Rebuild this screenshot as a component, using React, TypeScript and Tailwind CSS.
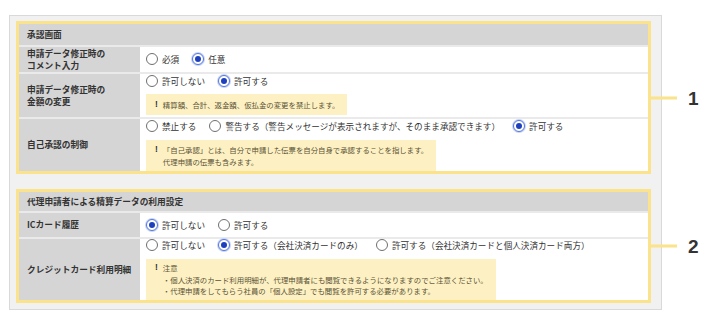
import React from "react";

interface Option {
  label: string;
  checked?: boolean;
}

function Radio({ label, checked }: Option) {
  return (
    <label className="flex items-center gap-[4px] whitespace-nowrap">
      {checked ? (
        <span className="w-[12px] h-[12px] rounded-full border border-[#5577dd] bg-white flex items-center justify-center shadow-[0_0_0_1px_#c8d4f4]">
          <span className="w-[6px] h-[6px] rounded-full bg-[#1f40bd]" />
        </span>
      ) : (
        <span className="w-[12px] h-[12px] rounded-full border border-[#6f6f6f] bg-white" />
      )}
      <span>{label}</span>
    </label>
  );
}

function Radios({ options, className }: { options: Option[]; className?: string }) {
  return (
    <div className={"flex items-center gap-[13px] " + (className ?? "")}>
      {options.map((o) => (
        <Radio key={o.label} label={o.label} checked={o.checked} />
      ))}
    </div>
  );
}

function Note({ lines, className }: { lines: string[]; className?: string }) {
  return (
    <div className={"self-start flex items-center bg-[#fdf1c3] pl-[9px] pr-[8px] text-[7.4px] leading-[11.5px] text-[#5b5236] " + (className ?? "")}>
      <div className="flex items-start gap-[5px]">
        <span className="font-bold text-[#333] text-[8.5px]" style={{ fontFamily: '"Liberation Sans", sans-serif' }}>!</span>
        <div className="flex flex-col">
          {lines.map((l) => (
            <span key={l} className="whitespace-nowrap">{l}</span>
          ))}
        </div>
      </div>
    </div>
  );
}

function Row({ label, children, className }: { label: React.ReactNode; children: React.ReactNode; className?: string }) {
  return (
    <div className="flex border-t-2 border-[#eaeaea]">
      <div className="w-[121px] shrink-0 bg-[#d5d5d5] flex items-center pl-[8px] font-bold text-[8.7px] leading-[12px] text-[#333]">
        {label}
      </div>
      <div className={"flex-1 bg-white pl-[6px] flex flex-col " + (className ?? "")}>{children}</div>
    </div>
  );
}

function Section({ title, num, headerH, children }: { title: string; num: string; headerH: string; children: React.ReactNode }) {
  return (
    <div className="relative">
      <div className="border-[3px] border-[#fae38b] bg-white">
        <div className={"bg-[#d5d5d5] flex items-center pl-[8px] font-bold text-[8.7px] text-[#333] " + headerH}>{title}</div>
        {children}
      </div>
      {/* callout */}
      <div className="absolute left-full top-1/2 -translate-y-1/2 flex items-center">
        <div className="w-[26px] h-[3px] bg-[#fae38b]" />
        <span className="ml-[11px] text-[19px] font-bold leading-none text-[#333]" style={{ fontFamily: '"Liberation Sans", Arial, sans-serif' }}>
          {num}
        </span>
      </div>
    </div>
  );
}

export default function App() {
  return (
    <div
      className="w-[713px] h-[329px] bg-white text-[8.6px] text-[#333] pt-[15px] pl-[9px]"
      style={{ fontFamily: '"Noto Sans CJK JP", "Noto Sans", sans-serif' }}
    >
      <div className="w-[653px] border border-[#d9d9d9] bg-[#f1f1f1] pt-[5px] pb-[6px] pl-[6px] pr-[10px] flex flex-col gap-[15px]">
        {/* 承認画面 */}
        <Section title="承認画面" num="1" headerH="h-[21px]">
          <Row label={<span>申請データ修正時の<br />コメント入力</span>} className="h-[25px] justify-center">
            <Radios options={[{ label: "必須" }, { label: "任意", checked: true }]} />
          </Row>
          <Row label={<span>申請データ修正時の<br />金額の変更</span>} className="h-[43px]">
            <Radios className="h-[14px]" options={[{ label: "許可しない" }, { label: "許可する", checked: true }]} />
            <Note className="mt-[6px] h-[21px]" lines={["精算額、合計、返金額、仮払金の変更を禁止します。"]} />
          </Row>
          <Row label="自己承認の制御" className="h-[52px]">
            <Radios
              className="h-[14px]"
              options={[
                { label: "禁止する" },
                { label: "警告する（警告メッセージが表示されますが、そのまま承認できます）" },
                { label: "許可する", checked: true },
              ]}
            />
            <Note
              className="mt-[7px] h-[31px]"
              lines={["「自己承認」とは、自分で申請した伝票を自分自身で承認することを指します。", "代理申請の伝票も含みます。"]}
            />
          </Row>
        </Section>

        {/* 代理申請者による精算データの利用設定 */}
        <Section title="代理申請者による精算データの利用設定" num="2" headerH="h-[19px]">
          <Row label="ICカード履歴" className="h-[24px] justify-center">
            <Radios options={[{ label: "許可しない", checked: true }, { label: "許可する" }]} />
          </Row>
          <Row label="クレジットカード利用明細" className="h-[61px]">
            <Radios
              className="h-[13px]"
              options={[
                { label: "許可しない" },
                { label: "許可する（会社決済カードのみ）", checked: true },
                { label: "許可する（会社決済カードと個人決済カード両方）" },
              ]}
            />
            <Note
              className="mt-[7px] h-[41px]"
              lines={[
                "注意",
                "・個人決済のカード利用明細が、代理申請者にも閲覧できるようになりますのでご注意ください。",
                "・代理申請をしてもらう社員の「個人設定」でも閲覧を許可する必要があります。",
              ]}
            />
          </Row>
        </Section>
      </div>
    </div>
  );
}
